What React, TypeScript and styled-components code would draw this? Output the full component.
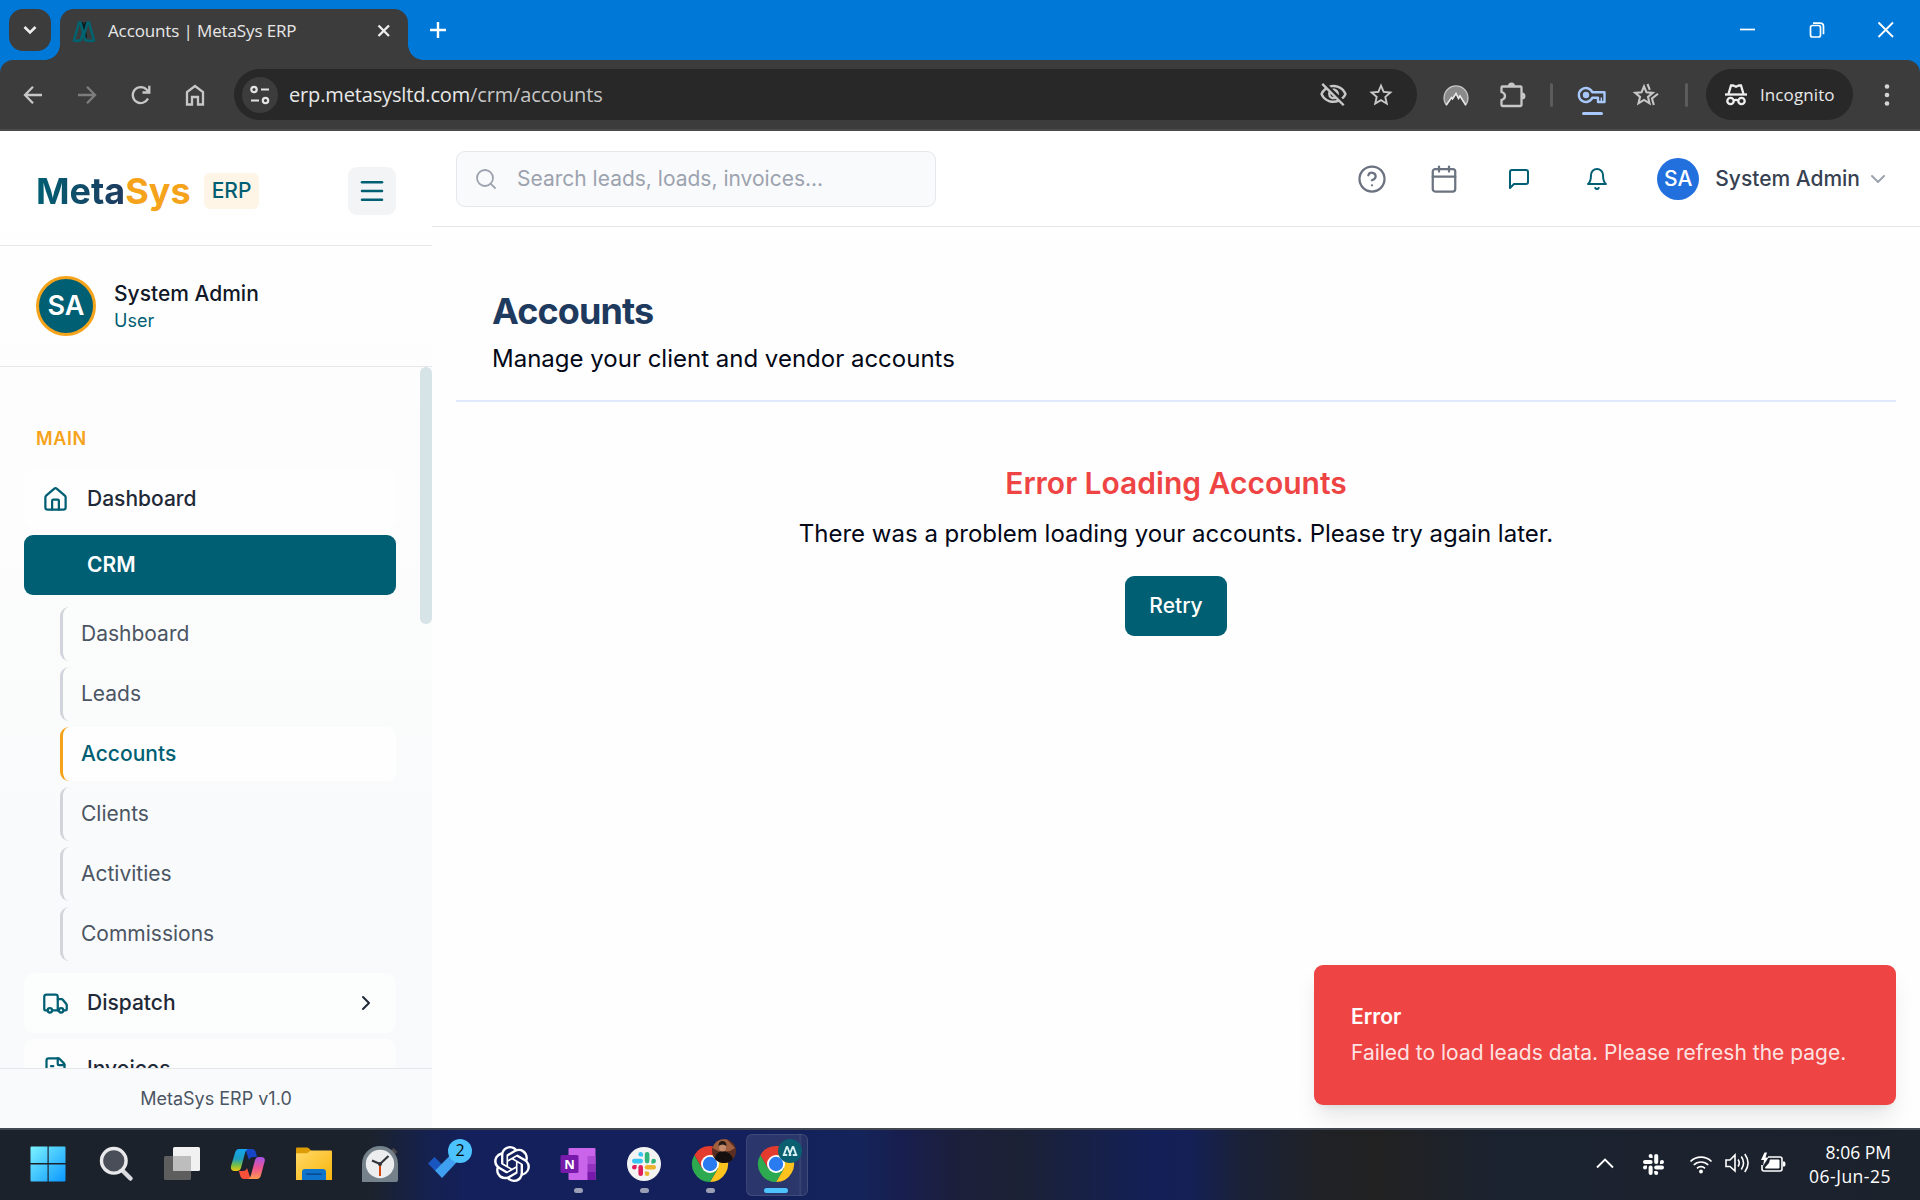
import React from "react";
import styled, { createGlobalStyle } from "styled-components";
import { Calendar, ChevronDown, ChevronRight, House, FileText, Menu, Search, Truck, CircleHelp } from "lucide-react";
import { MdOutlineVisibilityOff, MdStarOutline } from "react-icons/md";
import { SiOpenai } from "react-icons/si";

const teal = "#005f73";
const amber = "#f5a31a";
const chrome = "#3c3c3c";
const ink = "#282828";

const GlobalStyle = createGlobalStyle`
  * { box-sizing: border-box; }
  body { margin: 0; overflow: hidden; }
  h1, h2, p { margin: 0; }
  button { border: 0; font: inherit; padding: 0; }
  svg { display: block; flex: none; }
`;

const Screen = styled.div`
  width: 1920px;
  height: 1200px;
  display: flex;
  flex-direction: column;
  overflow: hidden;
  background: #fefefe;
  font-family: Inter, "Liberation Sans", sans-serif;
`;

const SystemText = styled.span<{ $size?: number; $track?: number }>`
  font-family: "Open Sans", "Noto Sans", sans-serif;
  font-size: ${(p) => p.$size ?? 17}px;
  letter-spacing: ${(p) => p.$track ?? 0}px;
  color: #e8e8e8;
  white-space: nowrap;
`;

/* ---------- Browser chrome ---------- */

const BrowserTop = styled.header`
  flex: none;
  height: 131px;
  background: #0078d7;
`;

const TabStrip = styled.div`
  height: 60px;
  display: flex;
  padding: 9px 9px 0;
`;

const TabSearch = styled.button`
  width: 42px;
  height: 42px;
  border-radius: 14px;
  background: ${chrome};
  display: grid;
  place-items: center;
`;

const Tab = styled.div`
  position: relative;
  width: 348px;
  height: 51px;
  margin-left: 9px;
  padding: 0 14px 8px 12px;
  border-radius: 14px 14px 0 0;
  background: ${chrome};
  display: flex;
  align-items: center;
  &::before,
  &::after {
    content: "";
    position: absolute;
    bottom: 0;
    width: 15px;
    height: 15px;
  }
  &::before {
    left: -15px;
    background: radial-gradient(circle at 0 0, transparent 14.5px, ${chrome} 15px);
  }
  &::after {
    right: -15px;
    background: radial-gradient(circle at 100% 0, transparent 14.5px, ${chrome} 15px);
  }
`;

const TabTitle = styled(SystemText)`
  margin-left: 12px;
  flex: 1;
`;

const NewTab = styled.div`
  width: 60px;
  height: 42px;
  display: grid;
  place-items: center;
`;

const WindowButtons = styled.div`
  margin-left: auto;
  margin-right: -9px;
  display: flex;
  height: 42px;
  & > * {
    width: 69px;
    height: 42px;
    display: grid;
    place-items: center;
  }
`;

const Toolbar = styled.div`
  height: 71px;
  padding: 9px 0 9px 6px;
  border-radius: 13px 13px 0 0;
  border-bottom: 2px solid #4a4a4a;
  background: ${chrome};
  display: flex;
  align-items: center;
`;

const Slot = styled.div<{ $w: number }>`
  width: ${(p) => p.$w}px;
  flex: none;
  display: grid;
  place-items: center;
  position: relative;
`;

const Omnibox = styled.div`
  width: 1183px;
  flex: none;
  height: 51px;
  margin: 0 11px 0 12px;
  padding-left: 8px;
  padding-right: 12px;
  border-radius: 26px;
  background: ${ink};
  display: flex;
  align-items: center;
`;

const SiteInfo = styled.div`
  width: 36px;
  height: 36px;
  border-radius: 50%;
  background: ${chrome};
  display: grid;
  place-items: center;
  margin-right: 11px;
`;

const Url = styled(SystemText)`
  flex: 1;
  span {
    color: #c6c6c6;
  }
`;

const ToolSeparator = styled.div`
  width: 3px;
  height: 24px;
  border-radius: 2px;
  background: #5c5c5c;
`;

const KeyUnderline = styled.div`
  position: absolute;
  left: 50%;
  bottom: -5px;
  width: 21px;
  height: 3px;
  margin-left: -10px;
  border-radius: 2px;
  background: #a8c7fa;
`;

const IncognitoPill = styled.div`
  width: 147px;
  flex: none;
  height: 51px;
  border-radius: 26px;
  background: ${ink};
  display: flex;
  align-items: center;
  padding-left: 15px;
  gap: 9px;
  margin-left: 3px;
`;

/* ---------- Sidebar ---------- */

const Page = styled.div`
  height: 997px;
  display: flex;
`;

const Sidebar = styled.aside`
  width: 432px;
  flex: none;
  display: flex;
  flex-direction: column;
  background: linear-gradient(180deg, #ffffff, #fdfdfd 30%, #f9fafb 75%, #f8f9fa);
`;

const BrandRow = styled.div`
  height: 115px;
  flex: none;
  padding: 6px 36px 0;
  border-bottom: 1px solid #e5e7eb;
  display: flex;
  align-items: center;
`;

const Logo = styled.div`
  font-size: 36px;
  font-weight: 700;
  line-height: 54px;
  color: ${amber};
  span {
    background: linear-gradient(90deg, ${teal}, #1f3a5f);
    -webkit-background-clip: text;
    background-clip: text;
    color: transparent;
  }
`;

const ErpBadge = styled.span`
  margin-left: 13px;
  height: 36px;
  padding: 0 8px;
  border-radius: 6px;
  background: #fef5e7;
  color: ${teal};
  font-size: 21px;
  font-weight: 500;
  line-height: 36px;
`;

const MenuButton = styled.button`
  margin-left: auto;
  width: 48px;
  height: 48px;
  border-radius: 9px;
  background: #f3f4f6;
  color: ${teal};
  display: grid;
  place-items: center;
`;

const UserRow = styled.div`
  height: 121px;
  flex: none;
  padding: 0 36px;
  border-bottom: 1px solid #e5e7eb;
  display: flex;
  align-items: center;
  gap: 18px;
`;

const Avatar = styled.div<{ $small?: boolean }>`
  width: ${(p) => (p.$small ? 42 : 60)}px;
  height: ${(p) => (p.$small ? 42 : 60)}px;
  flex: none;
  border-radius: 50%;
  border: ${(p) => (p.$small ? "0" : `3px solid ${amber}`)};
  padding-bottom: ${(p) => (p.$small ? 0 : 2)}px;
  background: ${(p) => (p.$small ? "#2170de" : teal)};
  color: #fff;
  font-size: ${(p) => (p.$small ? 21 : 27)}px;
  font-weight: ${(p) => (p.$small ? 500 : 600)};
  display: grid;
  place-items: center;
`;

const UserName = styled.div`
  font-size: 21px;
  font-weight: 500;
  line-height: 27px;
  color: #111827;
`;

const UserRole = styled.div`
  padding-top: 1px;
  font-size: 18px;
  line-height: 25px;
  color: ${teal};
`;

const NavScroll = styled.nav`
  height: 701px;
  flex: none;
  display: flex;
  overflow: hidden;
`;

const NavColumn = styled.div`
  width: 420px;
  padding: 54px 24px 0;
`;

const ScrollThumb = styled.div`
  width: 12px;
  height: 257px;
  border-radius: 6px;
  background: #d6e3e7;
`;

const SectionLabel = styled.div`
  padding: 4px 12px 0;
  height: 48px;
  font-size: 18px;
  font-weight: 600;
  line-height: 27px;
  letter-spacing: 0.6px;
  color: ${amber};
`;

const NavItem = styled.div<{ $active?: boolean }>`
  height: 60px;
  margin-bottom: 6px;
  padding: 0 18px;
  border-radius: 9px;
  background: ${(p) => (p.$active ? teal : "rgba(255,255,255,0.5)")};
  color: ${(p) => (p.$active ? "#fff" : "#1f2937")};
  font-size: 21px;
  font-weight: ${(p) => (p.$active ? 600 : 500)};
  display: flex;
  align-items: center;
`;

const NavIcon = styled.span`
  width: 27px;
  margin-right: 18px;
  color: ${teal};
`;

const NavLabel = styled.span`
  flex: 1;
  padding-bottom: 2px;
`;

const SubNav = styled.div`
  padding: 6px 0 6px 36px;
`;

const SubItem = styled.div<{ $active?: boolean }>`
  height: 54px;
  margin-bottom: 6px;
  padding-left: 18px;
  border-left: 3px solid ${(p) => (p.$active ? amber : "#d1d5db")};
  border-radius: 9px;
  background: ${(p) => (p.$active ? "rgba(255,255,255,0.8)" : "transparent")};
  color: ${(p) => (p.$active ? teal : "#4b5563")};
  font-size: 21px;
  font-weight: ${(p) => (p.$active ? 500 : 400)};
  line-height: 54px;
`;

const SidebarFooter = styled.div`
  flex: 1;
  border-top: 1px solid #e5e7eb;
  background: #f9fafc;
  color: #4b5563;
  font-size: 18px;
  display: grid;
  place-items: center;
`;

/* ---------- Main ---------- */

const Main = styled.main`
  flex: 1;
  display: flex;
  flex-direction: column;
  position: relative;
`;

const AppBar = styled.div`
  height: 96px;
  border-bottom: 1px solid #e5e7eb;
  padding: 0 30px 0 24px;
  display: flex;
  align-items: center;
  background: #fff;
`;

const SearchBox = styled.div`
  width: 480px;
  height: 56px;
  border: 1px solid #e5e7eb;
  border-radius: 9px;
  background: #f9fafb;
  color: #9ca3af;
  font-size: 21px;
  display: flex;
  align-items: center;
  padding-left: 17px;
  gap: 19px;
`;

const BarIcon = styled.div<{ $w: number; $accent?: boolean }>`
  width: ${(p) => p.$w}px;
  display: grid;
  place-items: center;
  color: ${(p) => (p.$accent ? teal : "#6b7280")};
`;

const BarIcons = styled.div`
  margin-left: auto;
  margin-right: 21px;
  display: flex;
  align-items: center;
`;

const AccountName = styled.span`
  margin: 0 6px 0 16px;
  font-size: 21px;
  font-weight: 500;
  color: #374151;
`;

const PageHeader = styled.div`
  margin: 0 24px;
  height: 175px;
  padding: 57px 36px 0;
  border-bottom: 2px solid #dfe9fb;
`;

const Title = styled.h1`
  font-size: 36px;
  font-weight: 700;
  line-height: 54px;
  letter-spacing: -0.9px;
  color: #1e3a5f;
`;

const Subtitle = styled.p`
  margin-top: 3px;
  font-size: 24px;
  line-height: 36px;
  color: #020817;
`;

const ErrorState = styled.section`
  padding-top: 60px;
  display: flex;
  flex-direction: column;
  align-items: center;
`;

const ErrorTitle = styled.h2`
  font-size: 30px;
  font-weight: 600;
  line-height: 42px;
  color: #ef4444;
`;

const ErrorText = styled.p`
  margin-top: 12px;
  font-size: 24px;
  line-height: 36px;
  color: #020817;
`;

const RetryButton = styled.button`
  margin-top: 24px;
  width: 102px;
  height: 60px;
  padding-bottom: 2px;
  border-radius: 9px;
  background: ${teal};
  color: #fff;
  font-size: 21px;
  font-weight: 500;
`;

const Toast = styled.div`
  position: absolute;
  right: 24px;
  bottom: 23px;
  width: 582px;
  height: 140px;
  padding: 34px 37px;
  border-radius: 9px;
  background: #ef4444;
  color: #fff;
  font-size: 21px;
  box-shadow: 0 15px 23px -4px rgba(0, 0, 0, 0.1), 0 6px 9px -6px rgba(0, 0, 0, 0.1);
`;

const ToastTitle = styled.div`
  font-weight: 600;
  line-height: 36px;
`;

const ToastText = styled.div`
  line-height: 36px;
  color: rgba(255, 255, 255, 0.87);
  white-space: nowrap;
`;

/* ---------- Taskbar ---------- */

const Taskbar = styled.footer`
  height: 72px;
  flex: none;
  border-top: 2px solid #41464f;
  padding-left: 15px;
  padding-right: 29px;
  display: flex;
  background: linear-gradient(
    90deg,
    #1c222c 0,
    #1c222c 370px,
    #152150 430px,
    #13205c 470px,
    #13205c 760px,
    #14245a 860px,
    #171e4e 900px,
    #1c1f3a 960px,
    #1b2135 1020px,
    #132057 1150px,
    #142056 1190px,
    #1a2138 1240px,
    #202226 1320px,
    #222222 1380px,
    #1b2330 1500px,
    #1c222c 1920px
  );
`;

const TaskItem = styled.div<{ $active?: boolean }>`
  width: 66px;
  height: 70px;
  position: relative;
  display: grid;
  place-items: center;
  &:first-child {
    margin-right: 2px;
  }
  &::before {
    content: "";
    display: ${(p) => (p.$active ? "block" : "none")};
    position: absolute;
    left: 3px;
    top: 4px;
    width: 60px;
    height: 60px;
    border-radius: 6px;
    border: 1px solid rgba(255, 255, 255, 0.1);
    background: linear-gradient(90deg, rgba(255, 255, 255, 0.1) 52px, rgba(255, 255, 255, 0.17) 53px, rgba(255, 255, 255, 0.08) 55px);
  }
  & > svg {
    position: relative;
    margin-bottom: 2px;
    overflow: visible;
  }
`;

const RunMark = styled.i<{ $wide?: boolean }>`
  position: absolute;
  bottom: 7px;
  left: 50%;
  width: ${(p) => (p.$wide ? 24 : 9)}px;
  margin-left: ${(p) => (p.$wide ? -12 : -4.5)}px;
  height: 5px;
  border-radius: 3px;
  background: ${(p) => (p.$wide ? "#4cc2ff" : "#9a9fb5")};
`;

const TodoBadge = styled.span`
  position: absolute;
  left: 35px;
  top: 9px;
  width: 24px;
  height: 24px;
  border-radius: 50%;
  background: #4cc2ff;
  color: #0a0a0a;
  font: 16px/23px "Open Sans", sans-serif;
  text-align: center;
`;

const Tray = styled.div`
  margin-left: auto;
  display: flex;
  align-items: center;
  padding-bottom: 2px;
`;

const Clock = styled.div`
  width: 90px;
  margin-left: 4px;
  display: flex;
  flex-direction: column;
  align-items: flex-end;
  line-height: 24px;
  & > span {
    color: #fff;
  }
`;

/* ---------- Drawings ---------- */

type LineIconProps = { d: string; size?: number; color?: string; width?: number; fill?: string; children?: React.ReactNode };

const LineIcon = ({ d, size = 30, color = "#c7c7c7", width = 2.3, fill = "none", children }: LineIconProps) => (
  <svg width={size} height={size} viewBox={`0 0 ${size} ${size}`} fill={fill} stroke={color} strokeWidth={width}>
    <path d={d} />
    {children}
  </svg>
);

const Favicon = () => (
  <svg width="24" height="24" viewBox="0 0 24 24">
    <path d="M11 7 13 3h2l-1 7 1 9h-2l-2-6-2 6Z M9 3h2l3 9-1 5Z" fill="#0b1a1f" />
    <path d="M2 21.500 7 3.500h1.500L11 13 9 21q-3.500 1.500-7 .5ZM22 21.500 17 3.500h-1.500L12 16l1 5q4 1.500 9 .5Z" fill="none" stroke="#00636f" strokeWidth="2.600" strokeLinejoin="round" />
  </svg>
);

const NordIcon = () => (
  <svg width="30" height="30" viewBox="0 0 30 30">
    <path d="M5.300 25A12 12 0 1 1 24.700 25L19 16l-1.500 2.500L15 13.500 11.500 19l-1-1.500Z" fill="#8a8a8a" stroke="#c7c7c7" strokeWidth="1.200" />
    <path d="m5.300 25 5.200-7.500 1 1.500L15 13.500l2.500 5L19 16l5.700 9" fill="none" stroke="#e6e6e6" strokeWidth="1.500" />
  </svg>
);

const KeyIcon = () => (
  <svg width="30" height="30" viewBox="0 0 30 30" fill="none" stroke="#a8c7fa" strokeWidth="2.400">
    <path d="M15.300 12.200A7 7 0 1 0 15.300 17.800H21V22h6.500V12.200Z" strokeLinejoin="round" />
    <circle cx="9" cy="15" r="3.200" fill="#a8c7fa" stroke="none" />
    <path d="M24.300 17.500v4" strokeWidth="1.500" />
  </svg>
);

const IncognitoIcon = () => (
  <svg width="30" height="30" viewBox="0 0 30 30" fill="none" stroke="#eee" strokeWidth="2.300">
    <path d="M4 14.500h22" />
    <path d="M7.500 14 10 5.500h2.200l2.800 1.200 2.800-1.200H20L22.500 14" />
    <circle cx="9.500" cy="21" r="3.200" />
    <circle cx="20.500" cy="21" r="3.200" />
    <path d="M12.700 20.500q2.300-1.200 4.600 0" />
  </svg>
);

const slackParts = (c: string[]) => (
  <>
    <g fill={c[0]}><rect x="0" y="6.800" width="11" height="4.600" rx="2.300" /><path d="M11 4.600H8.700A2.300 2.300 0 1 1 11 2.300Z" /></g>
    <g fill={c[1]}><rect x="12.800" y="0" width="4.600" height="11.400" rx="2.300" /><path d="M19.400 11.400V9.100a2.300 2.300 0 1 1 2.300 2.300Z" /></g>
    <g fill={c[2]}><rect x="12.800" y="13" width="11.200" height="4.600" rx="2.300" /><path d="M12.800 19.400h2.300a2.300 2.300 0 1 1-2.300 2.300Z" /></g>
    <g fill={c[3]}><rect x="6.400" y="13" width="4.600" height="11" rx="2.300" /><path d="M4.600 13v2.300A2.300 2.300 0 1 1 2.300 13Z" /></g>
  </>
);

const ChromeLogo = ({ children }: { children?: React.ReactNode }) => (
  <svg width="36" height="36" viewBox="0 0 36 36">
    <path d="M33.600 9A18 18 0 0 1 18 36L25.800 22.500 18 9Z" fill="#fcc31e" />
    <path d="M18 36A18 18 0 0 1 2.400 9L10.200 22.500 25.800 22.500Z" fill="#2da94f" />
    <path d="M2.400 9A18 18 0 0 1 33.600 9H18L10.200 22.500Z" fill="#e33b2e" />
    <circle cx="18" cy="18" r="9" fill="#fff" />
    <circle cx="18" cy="18" r="7.200" fill="#2a7bf0" />
    {children}
  </svg>
);

const taskApps: { name: string; icon: React.ReactNode; mark?: "dot" | "wide"; badge?: string }[] = [
  {
    name: "start",
    icon: (
      <svg width="36" height="36" viewBox="0 0 36 36">
        <defs>
          <linearGradient id="win" x1="0" y1="0" x2="1" y2="1" gradientUnits="objectBoundingBox">
            <stop offset="0" stopColor="#7cf3ff" /><stop offset="1" stopColor="#0a97ff" />
          </linearGradient>
        </defs>
        <path d="M1.500.5H17.500V17H.5V1.500q0-1 1-1ZM18.700.5h15.800q1 0 1 1V17H18.700ZM.5 18.400h17v17.100h-16q-1 0-1-1ZM18.700 18.400h16.800v16.100q0 1-1 1H18.700Z" fill="url(#win)" />
      </svg>
    ),
  },
  {
    name: "search",
    icon: (
      <svg width="36" height="36" viewBox="0 0 36 36">
        <path d="m24 24 8.500 8.500" stroke="#d9dbdf" strokeWidth="4.500" strokeLinecap="round" />
        <circle cx="15.800" cy="14.800" r="12.300" fill="#494e58" stroke="#e9e9eb" strokeWidth="3.400" />
      </svg>
    ),
  },
  {
    name: "task view",
    icon: (
      <svg width="36" height="36" viewBox="0 0 36 36">
        <rect x="0" y="10" width="27" height="24" rx="1.500" fill="#5e5e5e" />
        <rect x="9" y="1" width="27" height="24" rx="1.500" fill="#f1f1f1" />
        <path d="M9 10h18v15H10.500Q9 25 9 23.500Z" fill="#bdbdbd" />
      </svg>
    ),
  },
  {
    name: "copilot",
    icon: (
      <svg width="36" height="36" viewBox="0 0 36 36">
        <defs>
          <linearGradient id="cpA" x1="0" y1="0" x2="0" y2="1"><stop offset="0" stopColor="#12a5ee" /><stop offset=".45" stopColor="#1f9fc0" /><stop offset=".75" stopColor="#7ac043" /><stop offset="1" stopColor="#f2c811" /></linearGradient>
          <linearGradient id="cpB" x1="0" y1="0" x2="0" y2="1"><stop offset="0" stopColor="#a354e8" /><stop offset=".5" stopColor="#ee5391" /><stop offset="1" stopColor="#ff9a4d" /></linearGradient>
        </defs>
        <path d="M12 3h10q3 0 4 4l1 4h-4q-3 0-4 3l-3-9Z" fill="#1646c8" />
        <path d="M24 33H14q-3 0-4-4l-1-4h4q3 0 4-3l3 9Z" fill="#f9503a" />
        <path d="M9 3h10q-3 0-4 4l-4 15q-1 3-4 3H5q-5 0-4-5L5 7q1-4 4-4Z" fill="url(#cpA)" />
        <path d="M27 33H17q3 0 4-4l4-15q1-3 4-3h2q5 0 3.500 5L31 29q-1 4-4 4Z" fill="url(#cpB)" />
      </svg>
    ),
  },
  {
    name: "explorer",
    icon: (
      <svg width="36" height="36" viewBox="0 0 36 36">
        <defs>
          <linearGradient id="fold" x1="0" y1="0" x2="1" y2="1"><stop offset="0" stopColor="#ffd968" /><stop offset="1" stopColor="#f9b50b" /></linearGradient>
        </defs>
        <path d="M0 2.500Q0 1.500 1 1.500h10q1 0 2 1l3 3V12H0Z" fill="#dd9c05" />
        <path d="M0 8q0-.8.800-.8H11l4-2.700h20q1 0 1 1V34H0Z" fill="url(#fold)" />
        <path d="M6 34V26q0-3 3-3h18q3 0 3 3v8Z" fill="#0c74cc" />
        <path d="M11 28.200h14" stroke="#0a4d93" strokeWidth="1.800" strokeLinecap="round" />
      </svg>
    ),
  },
  {
    name: "clock",
    icon: (
      <svg width="36" height="36" viewBox="0 0 36 36">
        <path d="m29 4 2.500-2 4 4-2.500 2Z" fill="#4c4a48" />
        <path d="M0 36V18a18 18 0 0 1 36 0v16q0 2-2 2Z" fill="#75828c" />
        <circle cx="18" cy="18" r="14.200" fill="#ebedef" />
        <path d="M18 18v12" stroke="#d83b01" strokeWidth="1.900" />
        <path d="M10 14.500 18 18l8.500-8" stroke="#32363b" strokeWidth="2.200" fill="none" />
        <circle cx="18" cy="18" r="2" fill="#32363b" />
      </svg>
    ),
  },
  {
    name: "to do",
    badge: "2",
    icon: (
      <svg width="36" height="36" viewBox="0 0 36 36">
        <path d="M0 17.500 6.500 11l7 7-6.500 6.700Z" fill="#1a56c0" />
        <path d="M7 24.500 27.500 4l6.500 6.500-20 21.500Z" fill="#3f9ff0" />
      </svg>
    ),
  },
  { name: "chatgpt", icon: <SiOpenai size={36} color="#fff" /> },
  {
    name: "onenote",
    mark: "dot",
    icon: (
      <svg width="36" height="36" viewBox="0 0 36 36">
        <path d="M8.500 3q0-1 1-1H34.500q1 0 1 1V34H9.500q-1 0-1-1Z" fill="#ca64ea" />
        <path d="M27.500 10H35.500v8H27.500Z" fill="#ae4bd5" />
        <path d="M27.500 18H35.500v8H27.500Z" fill="#9332bf" />
        <path d="M27.500 26H35.500v8H27.500Z" fill="#7719aa" />
        <rect x=".5" y="9" width="18" height="18" rx="1.500" fill="#7719aa" />
        <text x="9.500" y="22.600" textAnchor="middle" fontFamily="Open Sans" fontWeight="700" fontSize="13" fill="#fff">N</text>
      </svg>
    ),
  },
  {
    name: "slack",
    mark: "dot",
    icon: (
      <svg width="36" height="36" viewBox="0 0 36 36">
        <circle cx="18" cy="18" r="17" fill="#f3f3f3" />
        <g transform="translate(6 6)">{slackParts(["#36c5f0", "#2eb67d", "#ecb22e", "#e01e5a"])}</g>
      </svg>
    ),
  },
  {
    name: "chrome",
    mark: "dot",
    icon: (
      <ChromeLogo>
        <g transform="translate(32 5)">
          <circle r="12" fill="#5a2f22" />
          <path d="M-11.500-3Q-8-13 3-11.500L11-3 6 0-4 1Z" fill="#a0603f" />
          <path d="M-9 8q1-8 8-8 8 1 10 8a12 12 0 0 1-18 0Z" fill="#15100f" />
          <ellipse cx="-1.500" cy="-4" rx="3.500" ry="4.500" fill="#c48a6c" />
          <path d="M-5.500-5q0-5 4-5t4 5q-4-3-8 0Z" fill="#231815" />
        </g>
      </ChromeLogo>
    ),
  },
  {
    name: "chrome incognito",
    mark: "wide",
    icon: (
      <ChromeLogo>
        <g transform="translate(32 5)">
          <circle r="12" fill="#0a6070" />
          <path d="m-6.200 4 2.800-8h.8L.5 4M6.200 4 3.400-4h-.8L-.5 4M-6.500 4h3M3.500 4h3" fill="none" stroke="#d9f0f3" strokeWidth="1.900" strokeLinejoin="round" strokeLinecap="round" />
        </g>
      </ChromeLogo>
    ),
  },
];

const subItems = ["Dashboard", "Leads", "Accounts", "Clients", "Activities", "Commissions"];

const BrowserChrome = () => (
  <BrowserTop>
    <TabStrip>
      <TabSearch aria-label="Search tabs">
        <LineIcon d="M5.500 8 11 13.500 16.500 8" size={22} color="#eee" width={2.600} />
      </TabSearch>
      <Tab>
        <Favicon />
        <TabTitle $size={17} $track={-0.13}>Accounts | MetaSys ERP</TabTitle>
        <LineIcon d="M4.500 4.500 15 15M15 4.500 4.500 15" size={20} color="#eee" width={2.300} />
      </Tab>
      <NewTab>
        <LineIcon d="M10 2v16M2 10h16" size={20} color="#fff" width={2.400} />
      </NewTab>
      <WindowButtons>
        <div><LineIcon d="M2 9.500h15" size={20} color="#fff" width={1.700} /></div>
        <div><LineIcon d="M3.500 7.500q0-2 2-2h6q2 0 2 2v7.500q0 2-2 2H5.500q-2 0-2-2ZM6 3.200h7q3.500 0 3.500 3v8" size={20} color="#fff" width={1.700} /></div>
        <div><LineIcon d="M2.500 2.500 17 17M17 2.500 2.500 17" size={20} color="#fff" width={1.800} /></div>
      </WindowButtons>
    </TabStrip>
    <Toolbar>
      <Slot $w={54}><LineIcon d="M24 15H7M15 6.700 7 15l8 8.300" /></Slot>
      <Slot $w={54}><LineIcon d="M6 15h17M15 6.700 23 15l-8 8.300" color="#7d7d7d" /></Slot>
      <Slot $w={54}><LineIcon d="M22 18.500A8 8 0 1 1 20.800 9.800L23 12.200M23.300 5.800v6.700H16.500" /></Slot>
      <Slot $w={54}><LineIcon d="M7 24.500V12L15 6l8 6v12.500H18V17H12v7.500Z" /></Slot>
      <Omnibox>
        <SiteInfo>
          <LineIcon d="M13 6.500h8M3 17.500h8" size={24} color="#e3e3e3" width={2.200}>
            <circle cx="6" cy="6.500" r="2.700" />
            <circle cx="17.500" cy="17.500" r="2.700" />
          </LineIcon>
        </SiteInfo>
        <Url $size={20} $track={-0.15}>erp.metasysltd.com<span>/crm/accounts</span></Url>
        <Slot $w={48}><MdOutlineVisibilityOff size={29} color="#c7c7c7" /></Slot>
        <Slot $w={48}><MdStarOutline size={28} color="#c7c7c7" /></Slot>
      </Omnibox>
      <Slot $w={56}><NordIcon /></Slot>
      <Slot $w={56}>
        <LineIcon d="M4.500 7.500q0-1 1-1h18q1 0 1 1V25q0 1-1 1h-18q-1 0-1-1v-5q3.500-1 3.500-4t-3.500-4Z">
          <path d="M11 6a3.500 3.500 0 0 1 7 0ZM25 12.500a3.500 3.500 0 0 1 0 7Z" fill="#c7c7c7" stroke="none" />
        </LineIcon>
      </Slot>
      <Slot $w={22}><ToolSeparator /></Slot>
      <Slot $w={59}><KeyIcon /><KeyUnderline /></Slot>
      <Slot $w={49}>
        <LineIcon d="m13 6.500 2.500 5.800 6.300.6-4.800 4.100 1.500 6.300-5.500-3.400-5.500 3.400 1.500-6.300-4.800-4.100 6.300-.6Z" width={2.100}>
          <path d="m16.500 4 2.300 5.800M27 13.700l-6 4.800 1.800 6.500" />
        </LineIcon>
      </Slot>
      <Slot $w={33}><ToolSeparator /></Slot>
      <IncognitoPill>
        <IncognitoIcon />
        <SystemText $size={17} $track={0.1}>Incognito</SystemText>
      </IncognitoPill>
      <Slot $w={67}>
        <svg width="6" height="24" viewBox="0 0 6 24" fill="#d5d5d5"><circle cx="3" cy="3.500" r="2.300" /><circle cx="3" cy="12" r="2.300" /><circle cx="3" cy="20.500" r="2.300" /></svg>
      </Slot>
    </Toolbar>
  </BrowserTop>
);

const SidebarPanel = () => (
  <Sidebar>
    <BrandRow>
      <Logo><span>Meta</span>Sys</Logo>
      <ErpBadge>ERP</ErpBadge>
      <MenuButton aria-label="Toggle sidebar"><Menu size={30} /></MenuButton>
    </BrandRow>
    <UserRow>
      <Avatar>SA</Avatar>
      <div>
        <UserName>System Admin</UserName>
        <UserRole>User</UserRole>
      </div>
    </UserRow>
    <NavScroll>
      <NavColumn>
        <SectionLabel>MAIN</SectionLabel>
        <NavItem>
          <NavIcon><House size={27} /></NavIcon>
          <NavLabel>Dashboard</NavLabel>
        </NavItem>
        <NavItem $active>
          <NavIcon />
          <NavLabel>CRM</NavLabel>
        </NavItem>
        <SubNav>
          {subItems.map((label) => (
            <SubItem key={label} $active={label === "Accounts"}>{label}</SubItem>
          ))}
        </SubNav>
        <NavItem>
          <NavIcon><Truck size={27} /></NavIcon>
          <NavLabel>Dispatch</NavLabel>
          <ChevronRight size={24} />
        </NavItem>
        <NavItem>
          <NavIcon><FileText size={27} /></NavIcon>
          <NavLabel>Invoices</NavLabel>
        </NavItem>
      </NavColumn>
      <ScrollThumb />
    </NavScroll>
    <SidebarFooter>MetaSys ERP v1.0</SidebarFooter>
  </Sidebar>
);

const MainPanel = () => (
  <Main>
    <AppBar>
      <SearchBox><Search size={24} strokeWidth={1.800} />Search leads, loads, invoices...</SearchBox>
      <BarIcons>
        <BarIcon $w={72}><CircleHelp size={30} strokeWidth={1.800} /></BarIcon>
        <BarIcon $w={72}><Calendar size={30} strokeWidth={1.800} /></BarIcon>
        <BarIcon $w={78} $accent>
          <svg width="24" height="24" viewBox="0 0 24 24" fill="none" stroke="currentColor" strokeWidth="2" strokeLinecap="round" strokeLinejoin="round">
            <path d="M21 15a2 2 0 0 1-2 2H7l-4 4V5a2 2 0 0 1 2-2h14a2 2 0 0 1 2 2z" />
          </svg>
        </BarIcon>
        <BarIcon $w={78} $accent>
          <svg width="24" height="24" viewBox="0 0 24 24" fill="none" stroke="currentColor" strokeWidth="2" strokeLinecap="round" strokeLinejoin="round">
            <path d="M6 8a6 6 0 0 1 12 0c0 7 3 9 3 9H3s3-2 3-9" />
            <path d="M10.300 21a1.940 1.940 0 0 0 3.400 0" />
          </svg>
        </BarIcon>
      </BarIcons>
      <Avatar $small>SA</Avatar>
      <AccountName>System Admin</AccountName>
      <ChevronDown size={24} color="#9ca3af" strokeWidth={2} />
    </AppBar>
    <PageHeader>
      <Title>Accounts</Title>
      <Subtitle>Manage your client and vendor accounts</Subtitle>
    </PageHeader>
    <ErrorState>
      <ErrorTitle>Error Loading Accounts</ErrorTitle>
      <ErrorText>There was a problem loading your accounts. Please try again later.</ErrorText>
      <RetryButton>Retry</RetryButton>
    </ErrorState>
    <Toast>
      <ToastTitle>Error</ToastTitle>
      <ToastText>Failed to load leads data. Please refresh the page.</ToastText>
    </Toast>
  </Main>
);

const SystemTaskbar = () => (
  <Taskbar>
    {taskApps.map((app) => (
      <TaskItem key={app.name} $active={app.mark === "wide"}>
        {app.icon}
        {app.badge && <TodoBadge>{app.badge}</TodoBadge>}
        {app.mark && <RunMark $wide={app.mark === "wide"} />}
      </TaskItem>
    ))}
    <Tray>
      <Slot $w={48}><LineIcon d="M3 14.500 11 6.500l8 8" size={22} color="#fff" width={1.900} /></Slot>
      <Slot $w={48}><svg width="21" height="21" viewBox="0 0 24 24">{slackParts(["#fff", "#fff", "#fff", "#fff"])}</svg></Slot>
      <Slot $w={48}>
        <LineIcon d="M1.500 9.500a14.800 14.800 0 0 1 21 0M4.800 13a10.200 10.200 0 0 1 14.400 0M8 16.300a5.700 5.700 0 0 1 8 0" size={24} color="#fff" width={1.700}>
          <circle cx="12" cy="19.500" r="1.900" fill="#fff" stroke="none" />
        </LineIcon>
      </Slot>
      <Slot $w={24}>
        <LineIcon d="M1 9v6.500h4l5 4.500V4L5 9ZM13 8.500q2.500 3.500 0 7M16.300 5.500q4.500 6.500 0 13M19.800 3q6.500 9 0 18" size={26} color="#fff" width={1.600} />
      </Slot>
      <Slot $w={48}>
        <svg width="26" height="26" viewBox="0 0 26 26">
          <path d="M8 6h12q2 0 2 2v10q0 2-2 2H4q-2 0-2-2v-4" fill="none" stroke="#fff" strokeWidth="1.600" />
          <path d="M23 10.500h1.500q1 .5 1 2.500t-1 2.500H23Z" fill="#fff" />
          <path d="M10 8.500h8.500q1 0 1 1v7q0 1-1 1H6q-1 0-1-1L9 12Z" fill="#fff" />
          <path d="M4.500 1.500 1 9h3l-1 6 5.500-8.500h-3L7 1.500Z" fill="#fff" />
        </svg>
      </Slot>
      <Clock>
        <SystemText $size={17.5} $track={0}>8:06 PM</SystemText>
        <SystemText $size={17.5} $track={0.5}>06-Jun-25</SystemText>
      </Clock>
    </Tray>
  </Taskbar>
);

export default function App() {
  return (
    <Screen>
      <GlobalStyle />
      <BrowserChrome />
      <Page>
        <SidebarPanel />
        <MainPanel />
      </Page>
      <SystemTaskbar />
    </Screen>
  );
}
